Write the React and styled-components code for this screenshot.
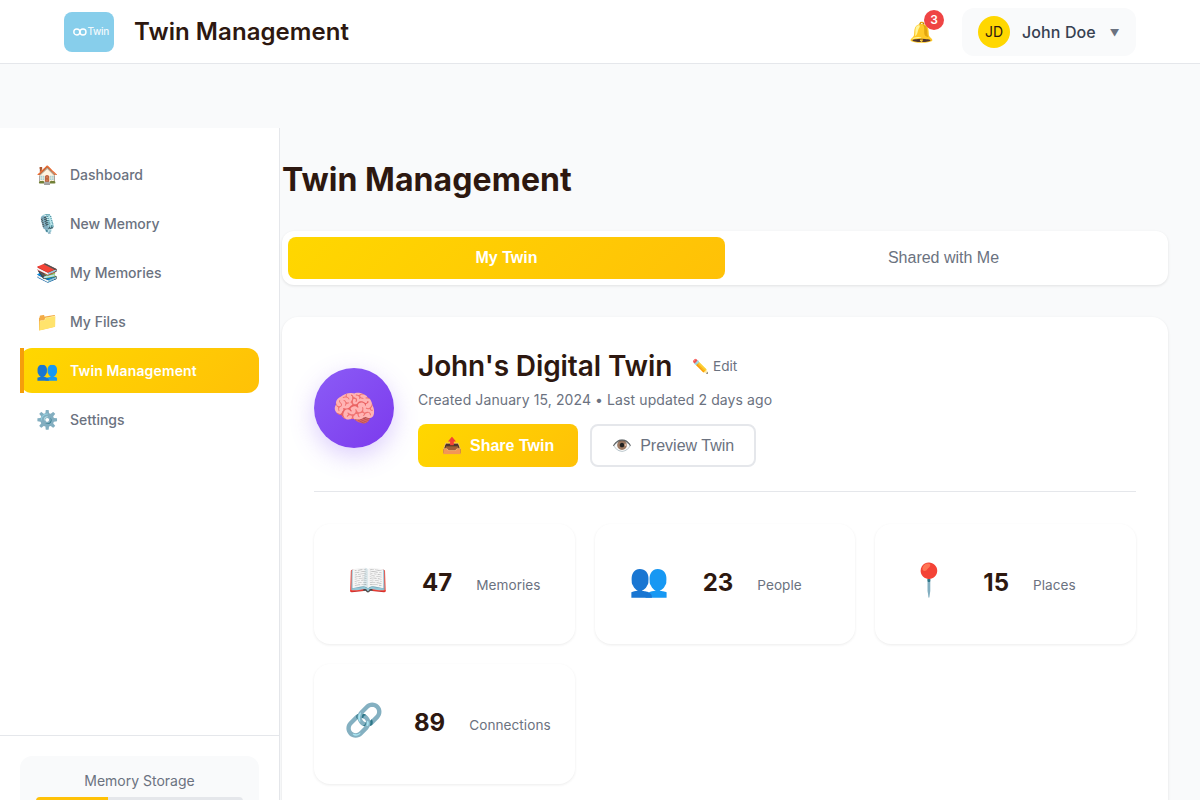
import styled, { createGlobalStyle } from "styled-components";

const GlobalStyle = createGlobalStyle`
  * {
    box-sizing: border-box;
  }

  html, body {
    margin: 0;
    height: 100%;
    overflow: hidden;
  }

  body {
    background: #F9FAFB;
    font-family: "Inter", "Noto Sans", sans-serif;
    line-height: 1.5;
    color: #2D1810;
  }
`;

const gold = "linear-gradient(135deg, #FFD700, #FFC107)";

const Page = styled.div`
  height: 100vh;
  overflow: hidden;
`;

const Header = styled.header`
  height: 64px;
  padding: 0 64px;
  display: flex;
  align-items: center;
  justify-content: space-between;
  background: #FFFFFF;
  border-bottom: 1px solid #E5E7EB;
`;

const Brand = styled.div`
  display: flex;
  align-items: center;
  gap: 20px;

  h1 {
    margin: 0;
    font-size: 24px;
    font-weight: 600;
    letter-spacing: 0.07px;
    color: #2D1810;
  }
`;

const Logo = styled.div`
  width: 50px;
  height: 40px;
  padding-right: 5px;
  border-radius: 8px;
  background: #87CEEB;
  display: flex;
  align-items: center;
  justify-content: flex-end;
  color: rgba(255, 255, 255, 0.9);
  font-size: 10px;
  font-weight: 500;
  letter-spacing: -0.3px;

  svg {
    display: block;
  }
`;

const HeaderRight = styled.div`
  display: flex;
  align-items: center;
  gap: 28px;
`;

const Bell = styled.div`
  position: relative;
  font-size: 20px;
  line-height: 24px;
`;

const Badge = styled.span`
  position: absolute;
  top: -10px;
  right: -10px;
  width: 20px;
  height: 20px;
  border-radius: 50%;
  background: #EF4444;
  color: #FFFFFF;
  font-size: 12px;
  font-weight: 600;
  line-height: 20px;
  text-align: center;
`;

const UserPill = styled.div`
  width: 174px;
  height: 48px;
  padding: 8px 16px;
  display: flex;
  align-items: center;
  gap: 12px;
  border-radius: 12px;
  background: #F9FAFB;

  b {
    font-size: 16px;
    font-weight: 500;
    letter-spacing: 0.1px;
    color: #374151;
  }

  i {
    margin: 3px 0 0 2px;
    font-style: normal;
    font-size: 9.6px;
    color: #6B7280;
  }
`;

const Avatar = styled.div`
  width: 32px;
  height: 32px;
  border-radius: 50%;
  background: #FFD700;
  color: #2D1810;
  font-size: 14px;
  line-height: 32px;
  text-align: center;
`;

const Body = styled.div`
  margin-top: 64px;
  display: flex;
  align-items: flex-start;
`;

const Sidebar = styled.aside`
  flex: 0 0 280px;
  height: 736px;
  display: flex;
  flex-direction: column;
  background: #FFFFFF;
  border-right: 1px solid #E5E7EB;
`;

const Nav = styled.nav`
  flex: 1;
  padding: 24px 20px;
  display: flex;
  flex-direction: column;
  gap: 4px;
`;

const NavItem = styled.a`
  position: relative;
  display: flex;
  align-items: center;
  gap: 12px;
  padding: 12px 16px;
  border-radius: 12px;
  font-size: 14px;
  font-weight: ${(props) => (props.$active ? 600 : 500)};
  letter-spacing: ${(props) => (props.$active ? "0.13px" : "0")};
  color: ${(props) => (props.$active ? "#FFFFFF" : "#6B7280")};
  background: ${(props) => (props.$active ? gold : "transparent")};

  span {
    font-size: 18px;
    line-height: 21px;
    width: 22px;
    text-align: center;
  }

  ${(props) =>
    props.$active &&
    `
    &::before {
      content: "";
      position: absolute;
      left: 0;
      top: 0;
      bottom: 0;
      width: 4px;
      background: #F59E0B;
    }
  `}
`;

const SidebarFooter = styled.div`
  height: 129px;
  padding: 20px;
  border-top: 1px solid #E5E7EB;
`;

const StorageBox = styled.div`
  padding: 16px;
  border-radius: 12px;
  background: #F9FAFB;

  p {
    margin: 0 0 7px;
    font-size: 14px;
    line-height: 18px;
    text-align: center;
    color: #6B7280;
  }
`;

const StorageBar = styled.div`
  height: 8px;
  border-radius: 4px;
  overflow: hidden;
  background: #E5E7EB;

  div {
    height: 100%;
    background: #FFC107;
  }
`;

const Main = styled.main`
  flex: 1;
  padding: 32px 32px 32px 2px;
`;

const PageTitle = styled.h2`
  margin: 0 0 32px;
  font-size: 32px;
  line-height: 39px;
  font-weight: 700;
  letter-spacing: 0.07px;
  color: #2D1810;
`;

const Tabs = styled.div`
  display: grid;
  grid-template-columns: 1fr 1fr;
  padding: 6px;
  margin-bottom: 32px;
  border-radius: 12px;
  background: #FFFFFF;
  box-shadow: 0 1px 3px rgba(0, 0, 0, 0.1);
`;

const Tab = styled.button`
  height: 42px;
  border: none;
  border-radius: 8px;
  font-family: "Liberation Sans", Arial, sans-serif;
  font-size: 16px;
  font-weight: ${(props) => (props.$active ? 700 : 400)};
  color: ${(props) => (props.$active ? "#FFFFFF" : "#6B7280")};
  background: ${(props) => (props.$active ? gold : "transparent")};
`;

const Card = styled.section`
  padding: 32px;
  border-radius: 16px;
  background: #FFFFFF;
  box-shadow: 0 1px 3px rgba(0, 0, 0, 0.1);
`;

const Profile = styled.div`
  display: flex;
  align-items: center;
  gap: 24px;
  padding-bottom: 24px;
  margin-bottom: 32px;
  border-bottom: 1px solid #E5E7EB;
`;

const ProfileAvatar = styled.div`
  flex: 0 0 80px;
  height: 80px;
  border-radius: 50%;
  background: linear-gradient(135deg, #8B5CF6, #7C3AED);
  box-shadow: 0 8px 24px rgba(139, 92, 246, 0.3);
  font-size: 36px;
  line-height: 80px;
  text-align: center;
`;

const NameRow = styled.div`
  display: flex;
  align-items: center;
  gap: 12px;
  margin-bottom: 6px;

  h3 {
    margin: 0;
    font-size: 28px;
    line-height: 34px;
    font-weight: 600;
    letter-spacing: -0.1px;
    color: #2D1810;
  }
`;

const EditButton = styled.button`
  padding: 4px 8px;
  border: none;
  background: none;
  font-family: "Inter", sans-serif;
  font-size: 13.6px;
  color: #6B7280;
`;

const Meta = styled.p`
  margin: 0 0 14px;
  font-size: 14px;
  letter-spacing: 0.1px;
  color: #6B7280;
`;

const Actions = styled.div`
  display: flex;
  gap: 12px;
`;

const ActionButton = styled.button`
  height: 43px;
  padding: 0 ${(props) => (props.$primary ? "24px" : "20px")};
  display: flex;
  align-items: center;
  gap: 8px;
  border-radius: 8px;
  border: ${(props) => (props.$primary ? "none" : "2px solid #E5E7EB")};
  background: ${(props) => (props.$primary ? gold : "#FFFFFF")};
  color: ${(props) => (props.$primary ? "#FFFFFF" : "#6B7280")};
  font-family: "Liberation Sans", Arial, sans-serif;
  font-size: 16px;
  font-weight: ${(props) => (props.$primary ? 700 : 400)};
`;

const Stats = styled.div`
  display: grid;
  grid-template-columns: repeat(3, 1fr);
  gap: 20px;
`;

const StatCard = styled.div`
  height: 120px;
  padding: 32px 0 0 ${(props) => (props.$wide ? "30px" : "34px")};
  display: flex;
  align-items: flex-start;
  border-radius: 16px;
  background: #FFFFFF;
  box-shadow: 0 1px 3px rgba(0, 0, 0, 0.08);

  span {
    font-size: 32px;
    margin-right: ${(props) => (props.$wide ? "30px" : "34px")};
  }

  b {
    margin: 9px 24px 0 0;
    font-size: 24px;
    font-weight: 700;
    color: #2D1810;
  }

  small {
    margin-top: 19px;
    font-size: 13.6px;
    letter-spacing: 0.05px;
    color: #6B7280;
  }
`;

const navItems = [
  { icon: "🏠", label: "Dashboard" },
  { icon: "🎙️", label: "New Memory" },
  { icon: "📚", label: "My Memories" },
  { icon: "📁", label: "My Files" },
  { icon: "👥", label: "Twin Management", active: true },
  { icon: "⚙️", label: "Settings" },
];

const stats = [
  { icon: "📖", value: 47, label: "Memories" },
  { icon: "👥", value: 23, label: "People" },
  { icon: "📍", value: 15, label: "Places" },
  { icon: "🔗", value: 89, label: "Connections", wide: true },
];

export default function App() {
  return (
    <Page>
      <GlobalStyle />
      <Header>
        <Brand>
          <Logo>
            <svg width="14" height="8" viewBox="0 0 14 8" fill="none" stroke="#FFFFFF" strokeWidth="1.4">
              <circle cx="3.8" cy="4" r="3" />
              <circle cx="10" cy="4" r="3" />
            </svg>
            Twin
          </Logo>
          <h1>Twin Management</h1>
        </Brand>
        <HeaderRight>
          <Bell>
            🔔
            <Badge>3</Badge>
          </Bell>
          <UserPill>
            <Avatar>JD</Avatar>
            <b>John Doe</b>
            <i>▼</i>
          </UserPill>
        </HeaderRight>
      </Header>
      <Body>
        <Sidebar>
          <Nav>
            {navItems.map((item) => (
              <NavItem key={item.label} $active={item.active}>
                <span>{item.icon}</span>
                {item.label}
              </NavItem>
            ))}
          </Nav>
          <SidebarFooter>
            <StorageBox>
              <p>Memory Storage</p>
              <StorageBar>
                <div style={{ width: "35%" }} />
              </StorageBar>
            </StorageBox>
          </SidebarFooter>
        </Sidebar>
        <Main>
          <PageTitle>Twin Management</PageTitle>
          <Tabs>
            <Tab $active>My Twin</Tab>
            <Tab>Shared with Me</Tab>
          </Tabs>
          <Card>
            <Profile>
              <ProfileAvatar>🧠</ProfileAvatar>
              <div>
                <NameRow>
                  <h3>John's Digital Twin</h3>
                  <EditButton>✏️ Edit</EditButton>
                </NameRow>
                <Meta>Created January 15, 2024 • Last updated 2 days ago</Meta>
                <Actions>
                  <ActionButton $primary>
                    <span>📤</span>
                    Share Twin
                  </ActionButton>
                  <ActionButton>
                    <span>👁️</span>
                    Preview Twin
                  </ActionButton>
                </Actions>
              </div>
            </Profile>
            <Stats>
              {stats.map((stat) => (
                <StatCard key={stat.label} $wide={stat.wide}>
                  <span>{stat.icon}</span>
                  <b>{stat.value}</b>
                  <small>{stat.label}</small>
                </StatCard>
              ))}
            </Stats>
          </Card>
        </Main>
      </Body>
    </Page>
  );
}
